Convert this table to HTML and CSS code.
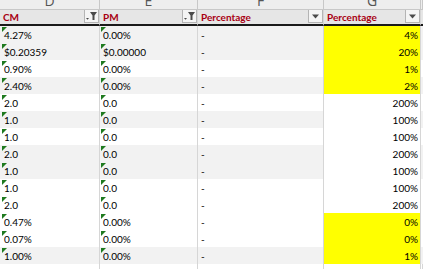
FILE: index.html
```html
<!DOCTYPE html>
<html>
<head>
<meta charset="utf-8">
<link rel="stylesheet" href="styles.css">
</head>
<body>
<div class="sheet">
  <div class="row letters">
    <div class="cell"><span class="ltr">D</span></div>
    <div class="cell"><span class="ltr">E</span></div>
    <div class="cell"><span class="ltr">F</span></div>
    <div class="cell"><span class="ltr">G</span></div>
    <div class="cell"></div>
  </div>
  <div class="row hdr">
    <div class="cell"><span class="ht">CM</span><span class="btn"><svg width="13" height="12" viewBox="0 0 13 12"><path d="M5 2h7l-2.5 3.5v4.5h-2v-4.5z" fill="#4a4a4a"/><path d="M1 8h3l-1.5 1.7z" fill="#4a4a4a"/></svg></span></div>
    <div class="cell"><span class="ht">PM</span><span class="btn"><svg width="13" height="12" viewBox="0 0 13 12"><path d="M5 2h7l-2.5 3.5v4.5h-2v-4.5z" fill="#4a4a4a"/><path d="M1 8h3l-1.5 1.7z" fill="#4a4a4a"/></svg></span></div>
    <div class="cell"><span class="ht">Percentage</span><span class="btn"><svg width="13" height="12" viewBox="0 0 13 12"><path d="M3 4.5h7l-3.5 4z" fill="#4a4a4a"/></svg></span></div>
    <div class="cell"><span class="ht">Percentage</span><span class="btn"><svg width="13" height="12" viewBox="0 0 13 12"><path d="M3 4.5h7l-3.5 4z" fill="#4a4a4a"/></svg></span></div>
    <div class="cell"></div>
  </div>

  <div class="row band"><div class="cell tri">4.27%</div><div class="cell tri">0.00%</div><div class="cell">-</div><div class="cell num yel">4%</div><div class="cell"></div></div>
  <div class="row band"><div class="cell tri">$0.20359</div><div class="cell tri">$0.00000</div><div class="cell">-</div><div class="cell num yel">20%</div><div class="cell"></div></div>
  <div class="row"><div class="cell tri">0.90%</div><div class="cell tri">0.00%</div><div class="cell">-</div><div class="cell num yel">1%</div><div class="cell"></div></div>
  <div class="row band"><div class="cell tri">2.40%</div><div class="cell tri">0.00%</div><div class="cell">-</div><div class="cell num yel">2%</div><div class="cell"></div></div>
  <div class="row"><div class="cell tri">2.0</div><div class="cell tri">0.0</div><div class="cell">-</div><div class="cell num wht">200%</div><div class="cell"></div></div>
  <div class="row band"><div class="cell tri">1.0</div><div class="cell tri">0.0</div><div class="cell">-</div><div class="cell num wht">100%</div><div class="cell"></div></div>
  <div class="row"><div class="cell tri">1.0</div><div class="cell tri">0.0</div><div class="cell">-</div><div class="cell num wht">100%</div><div class="cell"></div></div>
  <div class="row band"><div class="cell tri">2.0</div><div class="cell tri">0.0</div><div class="cell">-</div><div class="cell num wht">200%</div><div class="cell"></div></div>
  <div class="row band"><div class="cell tri">1.0</div><div class="cell tri">0.0</div><div class="cell">-</div><div class="cell num wht">100%</div><div class="cell"></div></div>
  <div class="row"><div class="cell tri">1.0</div><div class="cell tri">0.0</div><div class="cell">-</div><div class="cell num wht">100%</div><div class="cell"></div></div>
  <div class="row"><div class="cell tri">2.0</div><div class="cell tri">0.0</div><div class="cell">-</div><div class="cell num wht">200%</div><div class="cell"></div></div>
  <div class="row"><div class="cell tri">0.47%</div><div class="cell tri">0.00%</div><div class="cell">-</div><div class="cell num yel">0%</div><div class="cell"></div></div>
  <div class="row"><div class="cell tri">0.07%</div><div class="cell tri">0.00%</div><div class="cell">-</div><div class="cell num yel">0%</div><div class="cell"></div></div>
  <div class="row band"><div class="cell tri">1.00%</div><div class="cell tri">0.00%</div><div class="cell">-</div><div class="cell num yel">1%</div><div class="cell"></div></div>
  <div class="row tail"><div class="cell"></div><div class="cell"></div><div class="cell"></div><div class="cell"></div><div class="cell"></div></div>
</div>
</body>
</html>
```

FILE: styles.css
```css
html, body {
  margin: 0;
  padding: 0;
  background: #ffffff;
  overflow: hidden;
}
.sheet {
  width: 423px;
  height: 269px;
  overflow: hidden;
  font-family: Lato, "Liberation Sans", sans-serif;
  font-size: 10px;
  color: #000000;
}
.row {
  display: grid;
  grid-template-columns: 100px 98px 126px 97px 2px;
  height: 17px;
}
.cell {
  box-sizing: border-box;
  border-right: 1px solid #d6d6d6;
  position: relative;
  display: flex;
  align-items: flex-end;
  padding: 0 0 2px 3px;
  line-height: 11px;
  white-space: nowrap;
  overflow: hidden;
}
.row .cell:first-child {
  padding-left: 4px;
}
.band .cell {
  background: #f2f2f2;
}
.band .cell.wht,
.cell.wht {
  background: #ffffff;
}
.band .cell.yel,
.cell.yel {
  background: #ffff00;
}
.cell.num {
  justify-content: flex-end;
  padding-right: 2px;
}
.tri::before {
  content: "";
  position: absolute;
  top: 1px;
  left: 1px;
  width: 0;
  height: 0;
  border-top: 5px solid #1f7a1f;
  border-right: 5px solid transparent;
}
.row .tri:first-child::before {
  left: 2px;
}

/* column letters */
.letters {
  height: 10px;
}
.letters .cell {
  background: #eeeeee;
  border-bottom: 1px solid #c8c8c8;
  border-right-color: #c8c8c8;
  justify-content: center;
  align-items: flex-start;
  padding: 0;
}
.letters .cell:first-child {
  padding: 0;
}
.ltr {
  display: block;
  margin-top: -6px;
  font-family: "Open Sans", sans-serif;
  font-size: 14px;
  line-height: 14px;
  color: #555555;
}

/* header */
.hdr {
  height: 16px;
}
.hdr .cell {
  background: #e6e6e6;
  border-bottom: 2px solid #1a1a1a;
  padding: 0 0 1px 3px;
  justify-content: space-between;
  align-items: stretch;
}
.hdr .cell:first-child {
  padding-left: 3px;
}
.ht {
  align-self: flex-end;
  font-weight: bold;
  color: #a80012;
  line-height: 12px;
}
.btn {
  box-sizing: border-box;
  width: 15px;
  height: 14px;
  margin-top: -1px;
  border: 1px solid #b4b4b4;
  background: #f4f4f4;
  display: flex;
  align-items: center;
  justify-content: center;
}
.btn svg {
  display: block;
}
.tail {
  height: 8px;
}
.tail .cell {
  padding: 0;
}
```
